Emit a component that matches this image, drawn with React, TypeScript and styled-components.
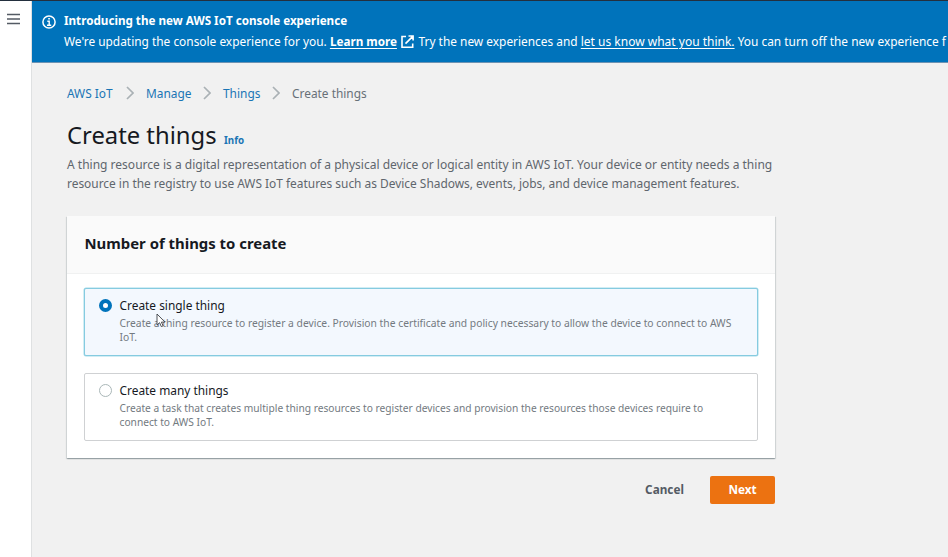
import React, { useState } from "react";
import styled, { createGlobalStyle } from "styled-components";

const GlobalStyle = createGlobalStyle`
  * { box-sizing: border-box; }
  body {
    margin: 0;
    overflow: hidden;
    font-family: "Noto Sans", "Open Sans", sans-serif;
    font-size: 12px;
    color: #16191f;
    background: #f1f1f1;
  }
`;

const Page = styled.div`
  display: flex;
  height: 557px;
  overflow: hidden;
  border-top: 1px solid #232f3e;
`;

const Rail = styled.nav`
  flex: 0 0 32px;
  padding: 12px 0 0 7px;
  background: #fff;
  border-right: 1px solid #dfe1e2;
`;

const MenuIcon = styled.svg`
  display: block;
  width: 13px;
  height: 12px;
  stroke: #545b64;
  stroke-width: 1.7;
`;

const Main = styled.main`
  flex: 1;
  min-width: 0;
`;

const Banner = styled.section`
  display: flex;
  gap: 8px;
  height: 62px;
  padding: 10px 0 0 10px;
  color: #fff;
  background: #0073bb;
  border-bottom: 1px solid #6d93b3;
  white-space: nowrap;
`;

const InfoIcon = styled.svg`
  flex: none;
  width: 14px;
  height: 14px;
  margin-top: 4px;
`;

const BannerTitle = styled.div`
  font-size: 11.67px;
  font-weight: 700;
  line-height: 20px;
`;

const BannerText = styled.div`
  font-size: 11.9px;
  line-height: 20px;
`;

const BannerLink = styled.a<{ $strong?: boolean }>`
  color: inherit;
  font-size: ${(p) => (p.$strong ? "11.7px" : "12px")};
  font-weight: ${(p) => (p.$strong ? 700 : 400)};
  text-decoration: underline;
  text-underline-offset: 2px;
`;

const ExternalIcon = styled.svg`
  width: 13px;
  height: 13px;
  margin: 0 1.5px 0 4px;
  vertical-align: -2px;
`;

const Content = styled.div`
  width: 708px;
  margin-left: 35px;
`;

const Breadcrumbs = styled.div`
  display: flex;
  align-items: center;
  height: 20px;
  margin-top: 20px;
  font-size: 11.9px;
`;

const Crumb = styled.span<{ $width: number; $current?: boolean }>`
  width: ${(p) => p.$width}px;
  color: ${(p) => (p.$current ? "#687078" : "#1a75b5")};
  white-space: nowrap;
`;

const Chevron = styled.svg`
  width: 8px;
  height: 14px;
  margin: 0 12px;
  fill: none;
  stroke: #aab1b5;
  stroke-width: 1.7;
`;

const TitleRow = styled.div`
  display: flex;
  align-items: baseline;
  gap: 7.5px;
  height: 36px;
  margin-top: 14px;
`;

const Title = styled.h1`
  margin: 0;
  font-size: 23.8px;
  font-weight: 400;
  line-height: 36px;
`;

const InfoLink = styled.a`
  color: #1a75b5;
  font-size: 9.8px;
  font-weight: 700;
`;

const Description = styled.p`
  margin: 2px 0 0;
  color: #5f666d;
  line-height: 19px;
  white-space: nowrap;
`;

const DescriptionLine = styled.span<{ $size: number }>`
  display: block;
  font-size: ${(p) => p.$size}px;
`;

const Card = styled.section`
  height: 242px;
  margin-top: 23px;
  background: #fff;
  box-shadow: 0 1px 1px rgba(0, 28, 36, 0.22), 1px 1px 1px rgba(0, 28, 36, 0.1),
    -1px 1px 1px rgba(0, 28, 36, 0.1);
`;

const CardHeader = styled.header`
  height: 58px;
  padding: 0 17.5px;
  background: #fafafa;
  border-bottom: 1px solid #f0f1f1;
`;

const CardTitle = styled.h2`
  margin: 0;
  font-size: 14.9px;
  font-weight: 700;
  line-height: 54px;
`;

const Options = styled.div`
  display: grid;
  gap: 17px;
  padding: 14px 17px 0;
`;

const Tile = styled.div<{ $selected: boolean }>`
  display: flex;
  gap: 7.5px;
  height: 68px;
  padding: 7px 14px;
  background: ${(p) => (p.$selected ? "#f3f8fe" : "#fff")};
  border: 1px solid ${(p) => (p.$selected ? "#85cbe0" : "#cfd1d3")};
  border-radius: 2px;
  box-shadow: ${(p) => (p.$selected ? "0 0 0 0.5px #a5dbea" : "none")};
`;

const Radio = styled.span<{ $selected: boolean }>`
  flex: none;
  width: 13px;
  height: 13px;
  margin-top: 3px;
  background: #fff;
  border: ${(p) => (p.$selected ? "4px solid #0073bb" : "1px solid #aab7b8")};
  border-radius: 50%;
`;

const TileLabel = styled.div`
  font-size: 11.9px;
  line-height: 18px;
`;

const TileText = styled.div<{ $size: number }>`
  color: #737a81;
  font-size: ${(p) => p.$size}px;
  line-height: 14px;
  white-space: nowrap;

  &:nth-child(2) { margin-top: 2px; }
`;

const Actions = styled.div`
  display: flex;
  justify-content: flex-end;
  margin-top: 18px;
`;

const Button = styled.button<{ $primary?: boolean }>`
  height: 28px;
  width: ${(p) => (p.$primary ? 65 : 91)}px;
  padding: 0 0 2px;
  font: 700 11.75px "Noto Sans", sans-serif;
  color: ${(p) => (p.$primary ? "#fff" : "#545b64")};
  background: ${(p) => (p.$primary ? "#ec7211" : "transparent")};
  border: 0;
  border-radius: 2px;
`;

const Cursor = styled.svg`
  position: absolute;
  left: 156px;
  top: 313px;
  width: 10px;
  height: 15px;
  pointer-events: none;
`;

const crumbs = [
  { label: "AWS IoT", width: 47 },
  { label: "Manage", width: 45 },
  { label: "Things", width: 37 },
  { label: "Create things", width: 76 },
];

const options = [
  {
    label: "Create single thing",
    size: 10.3,
    lines: [
      "Create a thing resource to register a device. Provision the certificate and policy necessary to allow the device to connect to AWS",
      "IoT.",
    ],
  },
  {
    label: "Create many things",
    size: 10.21,
    lines: [
      "Create a task that creates multiple thing resources to register devices and provision the resources those devices require to",
      "connect to AWS IoT.",
    ],
  },
];

export default function App() {
  const [selected, setSelected] = useState(0);
  return (
    <>
      <GlobalStyle />
      <Page>
        <Rail>
          <MenuIcon viewBox="0 0 13 12">
            <path d="M0 1.5h13M0 6h13M0 10.5h13" />
          </MenuIcon>
        </Rail>
        <Main>
          <Banner>
            <InfoIcon viewBox="0 0 14 14" fill="none" stroke="#fff">
              <circle cx="7" cy="7" r="6.1" strokeWidth="1.5" />
              <path d="M5.3 6.3H7.2V10M5 10.2h4.2" strokeWidth="1.4" />
              <path d="M6.2 3.8h1.7" strokeWidth="1.6" />
            </InfoIcon>
            <div>
              <BannerTitle>Introducing the new AWS IoT console experience</BannerTitle>
              <BannerText>
                We're updating the console experience for you.{" "}
                <BannerLink $strong>
                  Learn more
                  <ExternalIcon viewBox="0 0 13 13" fill="none" stroke="#fff" strokeWidth="1.6">
                    <path d="M5 1.5H1v10.7h10.7V8.5M7.5 1h4.6v4.6M12 1.1L4.5 8.6" />
                  </ExternalIcon>
                </BannerLink>{" "}
                Try the new experiences and <BannerLink>let us know what you think.</BannerLink>{" "}
                You can turn off the new experience f
              </BannerText>
            </div>
          </Banner>
          <Content>
            <Breadcrumbs>
              {crumbs.map((c, i) => (
                <React.Fragment key={c.label}>
                  {i > 0 && (
                    <Chevron viewBox="0 0 8 14">
                      <path d="M1 1l6 6-6 6" />
                    </Chevron>
                  )}
                  <Crumb $width={c.width} $current={i === crumbs.length - 1}>
                    {c.label}
                  </Crumb>
                </React.Fragment>
              ))}
            </Breadcrumbs>
            <TitleRow>
              <Title>Create things</Title>
              <InfoLink>Info</InfoLink>
            </TitleRow>
            <Description>
              <DescriptionLine $size={12.02}>
                A thing resource is a digital representation of a physical device or logical entity in
                AWS IoT. Your device or entity needs a thing
              </DescriptionLine>
              <DescriptionLine $size={11.92}>
                resource in the registry to use AWS IoT features such as Device Shadows, events, jobs,
                and device management features.
              </DescriptionLine>
            </Description>
            <Card>
              <CardHeader>
                <CardTitle>Number of things to create</CardTitle>
              </CardHeader>
              <Options>
                {options.map((o, i) => (
                  <Tile key={o.label} $selected={selected === i} onClick={() => setSelected(i)}>
                    <Radio $selected={selected === i} />
                    <div>
                      <TileLabel>{o.label}</TileLabel>
                      {o.lines.map((line) => (
                        <TileText key={line} $size={o.size}>
                          {line}
                        </TileText>
                      ))}
                    </div>
                  </Tile>
                ))}
              </Options>
            </Card>
            <Actions>
              <Button>Cancel</Button>
              <Button $primary>Next</Button>
            </Actions>
          </Content>
        </Main>
      </Page>
      <Cursor viewBox="0 0 10 15">
        <path
          d="M1 1v11l2.6-2.3L5.3 13.6l1.8-.8-1.7-3.7H9z"
          fill="#fff"
          stroke="#3b3f45"
          strokeWidth="0.9"
        />
      </Cursor>
    </>
  );
}
